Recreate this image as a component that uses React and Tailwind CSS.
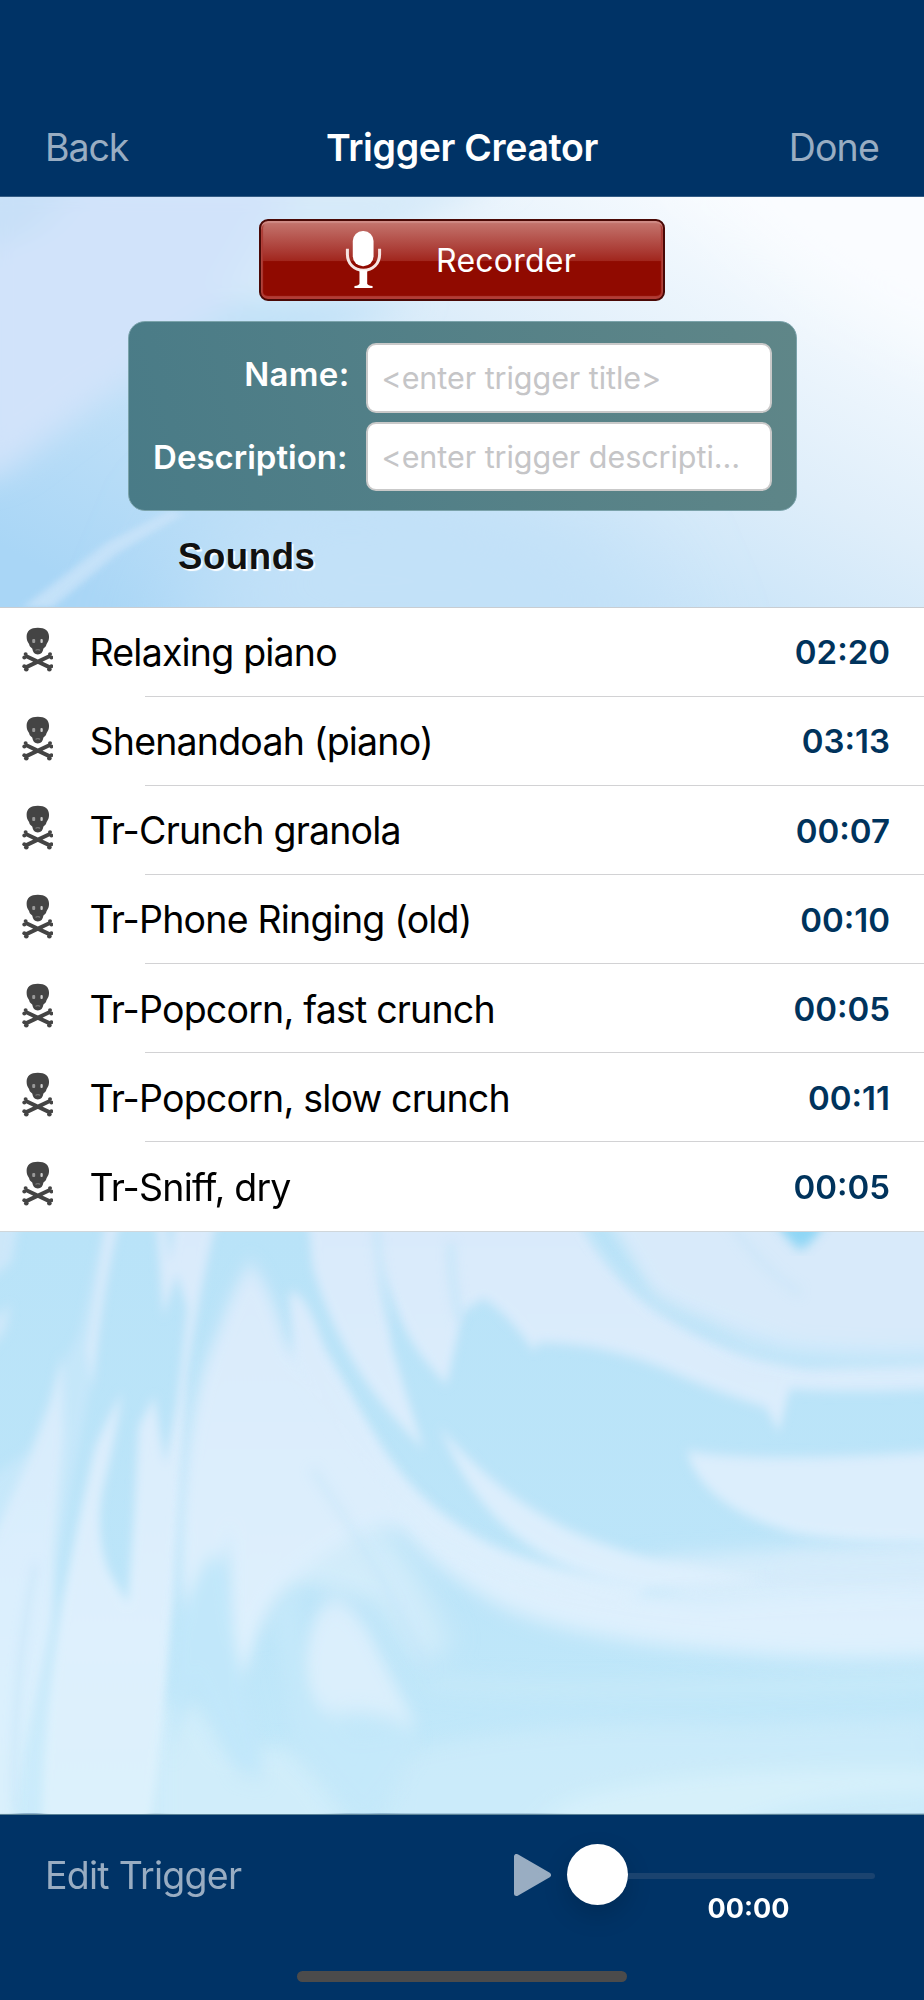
import React, { useState } from 'react'

const sounds = [
  { title: 'Relaxing piano', time: '02:20' },
  { title: 'Shenandoah (piano)', time: '03:13' },
  { title: 'Tr-Crunch granola', time: '00:07' },
  { title: 'Tr-Phone Ringing (old)', time: '00:10' },
  { title: 'Tr-Popcorn, fast crunch', time: '00:05' },
  { title: 'Tr-Popcorn, slow crunch', time: '00:11' },
  { title: 'Tr-Sniff, dry', time: '00:05' },
]

function SkullIcon() {
  return (
    <svg viewBox="36 36 94 134" className="w-[31px] h-[45px] blur-[0.5px]" fill="#444">
      <path d="M84 37c-22 0-34 10-34 27 0 10 3 15 6 20 3 4 2 8 5 11l6 5c2 12 7 18 17 18s15-6 17-18l6-5c3-3 2-7 5-11 3-5 6-10 6-20 0-17-12-27-34-27z" />
      <path d="M46 122l76 36M122 122l-76 36" stroke="#444" strokeWidth="12" />
      <circle cx="47" cy="117" r="6" />
      <circle cx="43" cy="127" r="6" />
      <circle cx="121" cy="117" r="6" />
      <circle cx="125" cy="127" r="6" />
      <circle cx="43" cy="154" r="6" />
      <circle cx="49" cy="163" r="7" />
      <circle cx="125" cy="154" r="6" />
      <circle cx="119" cy="163" r="7" />
      <rect x="67" y="71" width="9" height="12" rx="3" fill="#999" />
      <rect x="92" y="71" width="7" height="12" rx="3" fill="#ccc" />
      <path d="M77 105q7-3 14 0" stroke="#888" strokeWidth="3" fill="none" />
    </svg>
  )
}

function MicIcon() {
  return (
    <svg viewBox="318 92 110 176" className="w-[37px] h-[59px]">
      <rect x="341" y="95" width="62" height="105" rx="30" fill="#fff" />
      <path d="M325 148v16c0 28 20 48 48 48s48-20 48-48v-16" fill="none" stroke="#f6e4e2" strokeWidth="9" />
      <path d="M361 212h23v40q2 5 16 7v6h-54v-6q13-2 15-7z" fill="#fff" />
    </svg>
  )
}

// soft sky behind the form
function SkyBackdrop() {
  return (
    <svg className="absolute inset-0 w-full h-full" viewBox="0 20 1568 1232" preserveAspectRatio="none">
      <defs>
        <linearGradient id="sky" x1="0" y1="0.85" x2="0.9" y2="0.1">
          <stop offset="0" stopColor="#a9d6f6" />
          <stop offset="0.35" stopColor="#c4e2f8" />
          <stop offset="0.65" stopColor="#dfeefa" />
          <stop offset="1" stopColor="#f9fcff" />
        </linearGradient>
        <filter id="skyBlur" x="-20%" y="-20%" width="140%" height="140%"><feGaussianBlur stdDeviation="35" /></filter>
        <filter id="skyHaze" x="-30%" y="-30%" width="160%" height="160%"><feGaussianBlur stdDeviation="100" /></filter>
        <filter id="rayBlur"><feGaussianBlur stdDeviation="8" /></filter>
      </defs>
      <rect y="20" width="1568" height="1232" fill="url(#sky)" />
      <g filter="url(#skyHaze)">
        <path d="M1150-150H1750V550L1450 300z" fill="#fafcff" />
        <path d="M420 900L1000 1000 1100 1400H300z" fill="#c2e1f8" />
      </g>
      <g filter="url(#skyBlur)">
        <path d="M-60-20H500L400 330 200 590 0 860-60 900z" fill="#d1e3fa" />
        <path d="M-60-20H130L60 130-60 200z" fill="#c8e0f8" />
        <path d="M500-20H850L700 90 480 380 390 320z" fill="#d6eaf9" />
        <path d="M400 330L700 340 440 500 200 600z" fill="#c2e2f8" />
      </g>
      <path d="M40 1252L180 1060 290 960 310 975 200 1090 90 1252z" fill="#cbe4f9" filter="url(#rayBlur)" opacity="0.8" />
    </svg>
  )
}

// marbled swirls below the list
function MarbleBackdrop() {
  return (
    <svg className="w-full h-full block" viewBox="0 30 1568 1522" preserveAspectRatio="none">
      <defs>
        <linearGradient id="water" x1="0" y1="0" x2="0" y2="1">
          <stop offset="0" stopColor="#b9e3f8" />
          <stop offset="0.6" stopColor="#bce5f9" />
          <stop offset="1" stopColor="#c3e9fa" />
        </linearGradient>
        <linearGradient id="foam" gradientUnits="userSpaceOnUse" x1="0" y1="30" x2="0" y2="1552">
          <stop offset="0" stopColor="#d9eafb" />
          <stop offset="0.7" stopColor="#def0fd" />
          <stop offset="1" stopColor="#dcf1fc" />
        </linearGradient>
        <filter id="b7" x="-20%" y="-20%" width="140%" height="140%"><feGaussianBlur stdDeviation="8 16" /></filter>
        <filter id="b14" x="-20%" y="-20%" width="140%" height="140%"><feGaussianBlur stdDeviation="12 26" /></filter>
        <filter id="b25" x="-20%" y="-20%" width="140%" height="140%"><feGaussianBlur stdDeviation="25" /></filter>
      </defs>
      <rect y="30" width="1568" height="1522" fill="url(#water)" />

      {/* pale haze in the lower half */}
      <g filter="url(#b25)" fill="#d0edfa">
        <path d="M660 1400Q900 1300 1250 1320L1600 1300V1620H640z" opacity="0.6" />
        <path d="M960 1520Q1150 1420 1640 1440V1500Q1350 1480 1200 1620H900z" fill="#d6f0fa" />
        <path d="M480 1370Q560 1440 610 1620H250V1300Q330 1180 400 1400z" />
        <path d="M720 1190Q1000 1230 1640 1170V1230Q1100 1270 720 1230z" opacity="0.5" />
        <path d="M1100 880Q1300 860 1640 830V1010H1150z" fill="#d5ecfb" />
        <path d="M400 700L560 650Q700 850 760 1100L720 1180 640 1000 500 940 420 1100z" fill="#d2ecfa" />
      </g>

      {/* left streaks */}
      <g filter="url(#b7)" fill="url(#foam)">
        <path d="M187-60h26Q165 200 155 420L120 700 100 900 60 1640H-40V700L50 600 100 400 135 290z" opacity="0.35" />
        <path d="M187-60h26Q168 200 158 440L148 340z" />
        <path d="M262-60h16l10 170 14-170h75Q335 200 318 400 306 700 294 1000 282 1300 250 1640H68Q72 1300 105 1000 130 800 160 600 180 520 208 450 195 580 175 700 160 820 185 920L217 1000 228 760 235 540 262 460 280 640 300 480 318 230 300 140 277 250z" />
        <path d="M-30 900Q10 750 50 620L85 480 104 350 108 560 92 850 88 1050 40 1400 20 1640H-30z" opacity="0.85" />
        <path d="M-30-60H40L20 110-30 170zM-30 270L20 220 10 290-30 360z" opacity="0.6" />
      </g>

      {/* central plume running into the long curve */}
      <g filter="url(#b14)">
        <path d="M425 110Q460 170 485 320 530 370 570 440 630 600 690 720 760 820 860 890 1000 960 1200 985 1400 960 1640 950V1140Q1400 1160 1200 1125 960 1090 850 1010 740 920 690 820 640 780 590 840 530 900 480 960 440 1020 430 1120L405 1220Q390 1000 392 800L372 1000 320 1150Q295 900 318 600 335 400 370 290 395 170 425 110z" fill="url(#foam)" />
        <path d="M345 900Q365 860 385 900L398 1100 450 1460 400 1440 330 1200 290 1400 300 1050z" fill="#c1e7fa" />
        <path d="M460 1020L510 960 515 1200 600 1340 700 1320 710 1380 620 1580 500 1380z" fill="#c4e9fa" opacity="0.8" />
        <path d="M520 1140Q530 990 575 990 615 1030 640 1120L710 1330Q650 1290 600 1290 560 1300 540 1270 515 1200 520 1140z" fill="url(#foam)" opacity="0.9" />
      </g>

      <g filter="url(#b7)" fill="url(#foam)">
        <path d="M490 190Q515 170 550 330 600 470 650 600 720 760 830 850 950 930 1100 970L1050 1020Q850 960 720 820 600 640 500 380z" />
        <path d="M520-60H970Q1010 110 1110 230 1220 350 1370 385L1640 370V435Q1460 455 1340 440L1322 555 1300 490Q1200 440 1130 390 1020 320 915 320L905 340Q860 240 820 205L785 240 758 430Q720 370 700 320 670 240 645 120L665 330Q690 460 720 600 660 510 620 420 560 280 530 120z" />
        <path d="M745 540Q830 690 920 770 990 840 1120 890L1300 940 1100 965Q960 930 880 830 800 740 745 540z" />
        <path d="M1165 602Q1290 640 1640 598V840Q1460 850 1350 820 1190 750 1165 602z" />
      </g>
      <g filter="url(#b14)">
        <path d="M1010-60H1640V330Q1450 340 1350 320 1200 290 1110 200z" fill="#d8eafa" />
        <path d="M1200 280Q1400 355 1640 325V362Q1420 385 1270 340z" fill="#cbe8fa" />
        <path d="M1350 880Q1450 900 1640 880V930Q1450 940 1300 930z" fill="#d5ebfb" opacity="0.7" />
      </g>
      <g filter="url(#b7)" fill="none" stroke="#c3e6f9" strokeWidth="9">
        <path d="M25 1552Q20 1200 60 900" opacity="0.7" />
        <path d="M530 650Q630 880 670 1000 700 1100 730 1180" opacity="0.35" strokeWidth="20" />
        <path d="M980-20Q1030 130 1120 220 1210 300 1300 340" strokeWidth="9" />
        <path d="M1230-20Q1290 130 1360 190" strokeWidth="14" opacity="0.5" />
        <path d="M638-20Q640 140 665 260" strokeWidth="14" opacity="0.7" />
        <path d="M765 60Q765 160 780 260" strokeWidth="16" opacity="0.7" />
      </g>
      <path d="M1310-10H1405Q1375 72 1357 74 1340 60 1310-10z" fill="#8ed6f5" filter="url(#b7)" />
    </svg>
  )
}

function Field({ label, placeholder, value, onChange, labelClass }) {
  return (
    <label className="flex items-start justify-end">
      <span className={labelClass}>{label}</span>
      <input
        value={value}
        onChange={e => onChange(e.target.value)}
        placeholder={placeholder}
        className="w-[406px] h-[69.5px] shrink-0 rounded-[10px] border-2 border-[#c9c9c9] bg-white pl-[14px] pr-[22px] text-[30.5px] tracking-[-0.05px] text-black text-ellipsis placeholder:text-[#c5c5c7] outline-none"
      />
    </label>
  )
}

export default function App() {
  const [name, setName] = useState('')
  const [description, setDescription] = useState('')

  return (
    <div className="w-[924px] h-[2000px] flex flex-col overflow-hidden bg-[#003366] font-['Inter',sans-serif]">
      <header className="h-[196.5px] shrink-0 pt-[124px] px-[45px] grid grid-cols-3 items-start text-[37.5px] leading-[48px] border-b border-[#335c85]">
        <button className="text-left text-[#99adc2] tracking-[-1.1px]">Back</button>
        <h1 className="text-center font-semibold text-white whitespace-nowrap tracking-[-0.35px]">Trigger Creator</h1>
        <button className="text-right text-[#99adc2] tracking-[-0.8px]">Done</button>
      </header>

      <section className="relative h-[411px] shrink-0 border-b border-[#c8cdd2]">
        <SkyBackdrop />
        <div className="relative flex flex-col items-center pt-[22.5px]">
          <button className="w-[406px] h-[82px] flex items-start rounded-[9px] border-2 border-[#4a0906] bg-[linear-gradient(#c57770_0%,#a93831_40%,#a1261d_51%,#900a00_52%,#900a00_100%)] shadow-[inset_0_2px_1px_#d08b85,inset_0_-3px_1px_#b13c35,inset_2px_0_1px_#ab3a33,inset_-2px_0_1px_#ab3a33] text-white">
            <span className="ml-[84px] mt-[9px]"><MicIcon /></span>
            <span className="ml-[54px] mt-[18px] text-[32px] leading-[44px] tracking-[0.25px]">Recorder</span>
          </button>
          <div className="mt-5 w-[669px] h-[190px] rounded-[17px] border border-[#7ba3ab] bg-[linear-gradient(75deg,#497b87,#5f8688)] pt-[21px] pr-[24px] flex flex-col gap-[9px]">
            <Field
              label="Name:"
              placeholder="<enter trigger title>"
              value={name}
              onChange={setName}
              labelClass="mt-[9px] mr-[16px] text-[33px] leading-[44px] font-semibold text-white tracking-[0.3px]"
            />
            <Field
              label="Description:"
              placeholder="<enter trigger description>"
              value={description}
              onChange={setDescription}
              labelClass="mt-[13px] mr-[18px] text-[33px] leading-[44px] font-semibold text-white"
            />
          </div>
          <h2 className="self-start ml-[178px] mt-[21px] text-[36.5px] leading-[50px] font-bold text-[#111] tracking-[0.6px] font-['Liberation_Sans',Arial,sans-serif] [text-shadow:2px_2px_1px_#fff]">Sounds</h2>
        </div>
      </section>

      <ul className="shrink-0 bg-white">
        {sounds.map((s, i) => (
          <li key={i} className="h-[89.15px] flex">
            <span className="w-[89.5px] pl-[22px] pt-[19px] shrink-0"><SkullIcon /></span>
            <span className="relative flex-1 flex items-center justify-between pr-[34px] pt-[2px]">
              <span className="text-[37.5px] text-black tracking-[-0.8px]">{s.title}</span>
              <span className="text-[33px] font-semibold text-[#00335c]">{s.time}</span>
              {i < sounds.length - 1 && <span className="absolute left-[55.5px] right-0 bottom-0 h-px bg-[#d2d2d4]" />}
            </span>
          </li>
        ))}
      </ul>

      <div className="flex-1 min-h-0 border-t border-[#d0d6da]">
        <MarbleBackdrop />
      </div>

      <footer className="h-[186px] shrink-0 flex flex-col items-center border-t border-[#5b8397]">
        <div className="w-full flex items-start pl-[45px]">
          <button className="mt-[37px] w-[469px] text-left text-[37.5px] leading-[48px] tracking-[-0.75px] text-[#99adc2]">Edit Trigger</button>
          <svg viewBox="0 0 37 42" className="mt-[39px] w-[37px] h-[42px] shrink-0">
            <path d="M2.5 2.5v37L34.5 21z" fill="#99adc2" stroke="#99adc2" strokeWidth="5" strokeLinejoin="round" />
          </svg>
          <div className="ml-[15.5px] mt-[29px] w-[308px] flex flex-col">
            <div className="flex items-center">
              <span className="size-[61px] shrink-0 rounded-full bg-white shadow-[0_10px_26px_rgba(0,0,0,0.16)]" />
              <span className="mt-[3px] h-[6px] flex-1 rounded-r-full bg-[#1a436f]" />
            </div>
            <span className="ml-[141px] mt-[-12px] text-[27px] leading-[32px] font-bold text-white">00:00</span>
          </div>
        </div>
        <span className="mt-auto mb-[18px] w-[330px] h-[11px] rounded-full bg-[#4b4b4b]" />
      </footer>
    </div>
  )
}
